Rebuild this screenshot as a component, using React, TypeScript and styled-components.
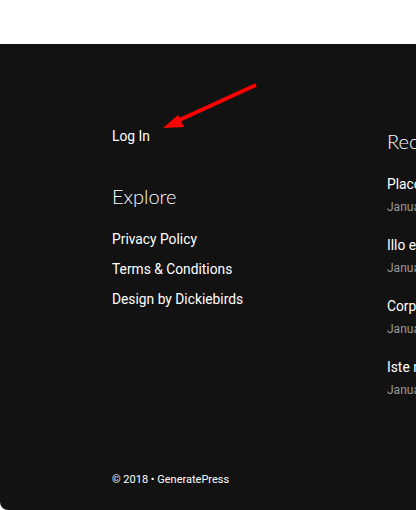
import React from 'react';
import styled, { createGlobalStyle } from 'styled-components';

const posts = [
  { title: 'Placeat voluptatem dolores', date: 'January 1, 2018' },
  { title: 'Illo est quibusdam', date: 'January 1, 2018' },
  { title: 'Corporis molestiae fugit', date: 'January 1, 2018' },
  { title: 'Iste natus ratione', date: 'January 1, 2018' },
];

const links = ['Privacy Policy', 'Terms & Conditions', 'Design by Dickiebirds'];

const App: React.FC = () => {
  return (
    <>
      <GlobalStyle />
      <Page>
        <TopSpace />
        <Footer>
          <Widgets>
            <Column>
              <LinkText>Log In</LinkText>
              <WidgetTitle $spaced>Explore</WidgetTitle>
              <LinkList>
                {links.map((l) => (
                  <LinkText key={l}>{l}</LinkText>
                ))}
              </LinkList>
            </Column>
            <Column>
              <WidgetTitle>Recent Posts</WidgetTitle>
              <PostList>
                {posts.map((p) => (
                  <Post key={p.title}>
                    <LinkText>{p.title}</LinkText>
                    <PostDate>{p.date}</PostDate>
                  </Post>
                ))}
              </PostList>
            </Column>
          </Widgets>
          <Copyright>© 2018 • GeneratePress</Copyright>
          <Arrow viewBox="0 0 120 70" width="120" height="70">
            <line x1="106" y1="10" x2="25" y2="47" stroke="#f00" strokeWidth="4" />
            <polygon points="13,53 28,40 34,52" fill="#f00" />
          </Arrow>
        </Footer>
      </Page>
    </>
  );
};

const GlobalStyle = createGlobalStyle`
  html, body {
    margin: 0;
    padding: 0;
    background: #fff;
    overflow: hidden;
  }
`;

const Page = styled.div`
  width: 416px;
  height: 510px;
  overflow: hidden;
  font-family: Roboto, 'Liberation Sans', sans-serif;
`;

const TopSpace = styled.div`
  height: 44px;
  background: #fff;
`;

const Footer = styled.footer`
  position: relative;
  height: 466px;
  box-sizing: border-box;
  background: #121212;
  border-bottom-left-radius: 8px;
  padding: 82px 0 0 112px;
  display: flex;
  flex-direction: column;
`;

const Widgets = styled.div`
  display: grid;
  grid-template-columns: 275px 275px;
  flex: 1;
`;

const Column = styled.div`
  display: flex;
  flex-direction: column;
`;

const WidgetTitle = styled.h3<{ $spaced?: boolean }>`
  margin: ${(p) => (p.$spaced ? '35px' : '0')} 0 18px;
  font-family: Lato, 'DejaVu Sans', sans-serif;
  font-weight: 300;
  font-size: 20px;
  line-height: 30px;
  color: #fff;
  white-space: nowrap;
`;

const LinkText = styled.div`
  font-size: 13.8px;
  line-height: 20px;
  color: #fff;
  white-space: nowrap;
`;

const LinkList = styled.div`
  display: flex;
  flex-direction: column;
  gap: 10px;
`;

const PostList = styled.div`
  display: flex;
  flex-direction: column;
  gap: 19px;
`;

const Post = styled.div`
  display: flex;
  flex-direction: column;
  gap: 4px;
`;

const PostDate = styled.div`
  font-size: 12px;
  line-height: 18px;
  color: #999;
  white-space: nowrap;
`;

const Copyright = styled.div`
  font-size: 11px;
  line-height: 18px;
  color: #fff;
  margin-bottom: 21px;
`;

const Arrow = styled.svg`
  position: absolute;
  left: 150px;
  top: 31px;
`;

export default App;
